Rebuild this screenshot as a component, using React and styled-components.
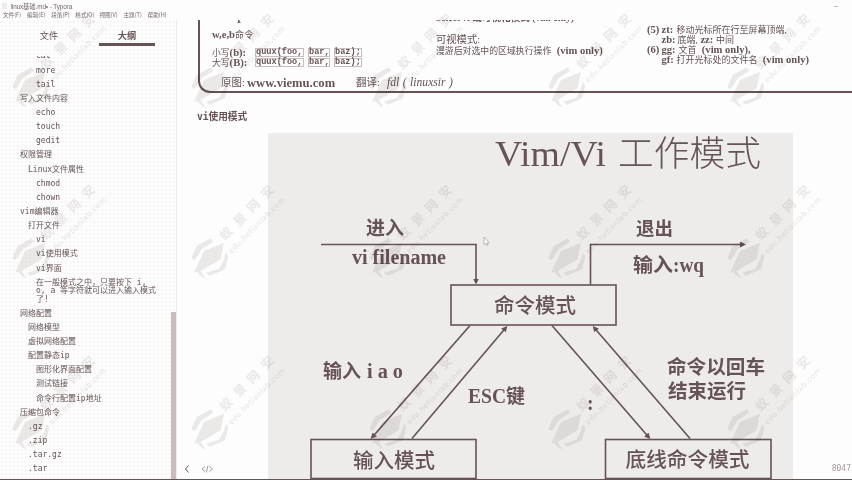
import React from "react";
import styled, { createGlobalStyle, css } from "styled-components";

const INK = "#655355";
const MID = "#c8bcbc";
const SOFT = "#eeecea";
const PAPER = "#fdfdfd";
const SANS = '"Noto Sans CJK SC", sans-serif';
const MONO = '"DejaVu Sans Mono", "Noto Sans CJK SC", monospace';
const SERIF = '"Liberation Serif", "Noto Sans CJK SC", serif';

const Global = createGlobalStyle`
  * { box-sizing: border-box; }
  body { margin: 0; background: ${PAPER}; color: ${INK}; overflow: hidden; }
`;

const Window = styled.div`
  position: relative;
  display: flex;
  flex-direction: column;
  width: 852px;
  height: 480px;
  overflow: hidden;
  background: ${PAPER};
  border-bottom: 1px solid ${INK};
`;

const Header = styled.header`
  height: 20px;
  flex: none;
  font-family: ${SANS};
  white-space: nowrap;
`;

const TitleBar = styled.div`
  display: flex;
  align-items: center;
  height: 11px;
  padding: 1px 14px 0 2px;
  font: 6.3px/9px "Liberation Sans", ${SANS};
  letter-spacing: -0.07px;
  color: #756466;
`;

const AppIcon = styled.span`
  width: 5px;
  height: 6px;
  margin-right: 3.5px;
  background: ${SOFT};
`;

const Minimise = styled.span`
  width: 4px;
  height: 1px;
  margin-left: auto;
  background: ${MID};
`;

const MenuBar = styled.nav`
  display: grid;
  grid-template-columns: repeat(7, 24.1px);
  height: 9px;
  padding-left: 3px;
  font-size: 5.6px;
  line-height: 9px;
  color: #756466;
`;

const Body = styled.div`
  display: flex;
  flex: 1;
  min-height: 0;
`;

const Sidebar = styled.aside`
  display: flex;
  flex-direction: column;
  flex: none;
  width: 177px;
  border-right: 1px solid ${SOFT};
  background: radial-gradient(circle, #eeecea 0.6px, transparent 0.8px) 0 0 / 4px 4px ${PAPER};
`;

const Tabs = styled.div`
  display: grid;
  grid-template-columns: 78px 78px;
  flex: none;
  height: 26px;
  padding-left: 10px;
`;

const Tab = styled.div`
  display: flex;
  justify-content: center;
  align-items: center;
  width: ${(p) => (p.$active ? "56px" : "78px")};
  height: 26px;
  margin-left: ${(p) => (p.$active ? "11px" : 0)};
  padding-top: 6px;
  border-bottom: 3px solid ${(p) => (p.$active ? INK : "transparent")};
  font: ${(p) => (p.$active ? 700 : 400)} 9.2px/14px ${SANS};
`;

const Outline = styled.div`
  display: flex;
  flex: 1;
  min-height: 0;
  margin-top: 10px;
  overflow: hidden;
`;

const OutlineList = styled.ul`
  flex: 1;
  margin: -6.4px 0 0;
  padding: 0;
  list-style: none;
  font: 8px/8.5px ${MONO};
`;

const OutlineItem = styled.li`
  min-height: 14.15px;
  padding: 2.8px 12px 2.8px ${(p) => 20 + p.$level * 8}px;
  white-space: ${(p) => (p.$wrap ? "pre-line" : "nowrap")};
  ${(p) => !p.$wrap && css`height: 14.15px;`}
`;

const ScrollThumb = styled.div`
  width: 5px;
  margin-top: 256px;
  background: ${MID};
`;

const Main = styled.main`
  display: flex;
  flex-direction: column;
  flex: 1;
  min-width: 0;
  overflow: hidden;
`;

const Sheet = styled.section`
  display: grid;
  grid-template-columns: 224px 211px 1fr;
  flex: none;
  height: 73px;
  margin-left: 21px;
  padding-left: 12px;
  border: solid ${INK};
  border-width: 0 0 2px 2px;
  border-bottom-left-radius: 12px;
  overflow: hidden;
  font-family: ${SERIF};
  white-space: nowrap;
`;

const SheetColumn = styled.div`
  display: flex;
  flex-direction: column;
  padding-top: ${(p) => p.$top || 0}px;
`;

const Line = styled.div`
  display: flex;
  align-items: center;
  flex: none;
  height: ${(p) => p.$h}px;
  margin-left: ${(p) => p.$indent || 0}px;
  font-size: ${(p) => p.$size || 9}px;
  line-height: ${(p) => p.$h}px;
  b {
    white-space: pre;
    font-size: 10.6px;
  }
`;

const Stub = styled.div`
  display: flex;
  align-items: flex-end;
  flex: none;
  height: ${(p) => p.$h}px;
  overflow: hidden;
  padding-left: ${(p) => p.$indent || 0}px;
  font: 700 ${(p) => p.$size || 11}px/11px ${SERIF};
`;

const Label = styled.span`
  width: ${(p) => p.$w}px;
  flex: none;
  font-weight: ${(p) => (p.$bold ? 700 : 400)};
  font-size: ${(p) => (p.$bold ? "10.6px" : "inherit")};
`;

const Token = styled.code`
  width: ${(p) => p.$w}px;
  height: 9px;
  margin-right: 4px;
  border: 1px solid ${MID};
  font: 700 8.6px/7px "Liberation Mono", monospace;
  white-space: pre;
`;

const Site = styled.span`
  flex: none;
  width: 109px;
  font-size: 12.6px;
  font-weight: 700;
`;

const Translator = styled.i`
  font-size: 11.6px;
  word-spacing: 0.6px;
`;

const SectionTitle = styled.h2`
  flex: none;
  margin: 16px 0 8.5px 20px;
  font: 700 9.7px/15.5px ${MONO};
  letter-spacing: -0.05px;
`;

const Figure = styled.svg`
  display: block;
  flex: none;
  width: 525px;
  height: 347px;
  margin-left: 91px;
  background: ${SOFT};
`;

const Footer = styled.footer`
  position: absolute;
  left: 177px;
  right: 0;
  bottom: 4px;
  display: flex;
  align-items: center;
  height: 12px;
  padding: 0 1px 0 7px;
  font: 8px/12px ${MONO};
  color: #a89a9b;
  svg { fill: none; stroke-width: 1; }
`;

const WordCount = styled.span`
  margin-left: auto;
`;

const WatermarkLayer = styled.div`
  position: absolute;
  inset: 13px 0 0 12px;
  display: grid;
  grid-template-columns: repeat(5, 178.7px);
  grid-auto-rows: 171px;
  pointer-events: none;
  mix-blend-mode: multiply;
`;

const MarkSvg = styled.svg`
  width: 100px;
  height: 100px;
  fill: #edebea;
  font-family: ${SANS};
`;

const Pointer = styled.svg`
  position: absolute;
  left: 483px;
  top: 236px;
  width: 7px;
  height: 11px;
`;

const menus = ["文件(F)", "编辑(E)", "段落(P)", "格式(O)", "视图(V)", "主题(T)", "帮助(H)"];

const outline = [
  [2, "cat"], [2, "more"], [2, "tail"], [0, "写入文件内容"], [2, "echo"], [2, "touch"],
  [2, "gedit"], [0, "权限管理"], [1, "Linux文件属性"], [2, "chmod"], [2, "chown"],
  [0, "vim编辑器"], [1, "打开文件"], [2, "vi"], [2, "vi使用模式"], [2, "vi界面"],
  [2, "在一般模式之中，只要按下 i,\no, a 等字符就可以进入输入模式\n了!"],
  [0, "网络配置"], [1, "网络模型"], [1, "虚拟网络配置"], [1, "配置静态ip"],
  [2, "图形化界面配置"], [2, "测试链接"], [2, "命令行配置ip地址"], [0, "压缩包命令"],
  [1, ".gz"], [1, ".zip"], [1, ".tar.gz"], [1, ".tar"],
];

const wires = [
  "M321 244H476V282",
  "M590.5 284V244H744",
  "M470 325L372 437",
  "M412 438L506 327",
  "M552 325L649 437",
  "M690 438L594 327",
];

const boxes = [[451, 284.5, 165, 40], [311, 439, 165, 39], [605.5, 439, 165.5, 39]];

const captions = [
  { x: 366, y: 234, w: 38, size: 19, text: "进入" },
  { x: 352, y: 263.5, w: 94, size: 20, text: "vi filename" },
  { x: 636, y: 234, w: 37, size: 18.5, text: "退出" },
  { x: 633, y: 271.5, w: 40, size: 19.5, text: "输入" },
  { x: 673, y: 271, w: 31, size: 20.5, text: ":wq" },
  { x: 494, y: 312.5, w: 82, size: 20.5, text: "命令模式", medium: true },
  { x: 323, y: 377, w: 38, size: 19, text: "输入" },
  { x: 367, y: 377, w: 36, size: 20, text: "i a o" },
  { x: 468, y: 402, w: 38, size: 20, text: "ESC" },
  { x: 506, y: 402, w: 19, size: 19, text: "键" },
  { x: 587, y: 409, w: 6.5, size: 20, text: ":" },
  { x: 667, y: 373, w: 98, size: 19.5, text: "命令以回车" },
  { x: 668, y: 397.5, w: 78, size: 19.5, text: "结束运行" },
  { x: 353, y: 467.5, w: 82, size: 20.5, text: "输入模式", medium: true },
  { x: 625.5, y: 466.5, w: 124, size: 20.7, text: "底线命令模式", medium: true },
];

function ModeDiagram() {
  return (
    <Figure viewBox="268 132.5 525 347" fontFamily={SERIF} fill={INK}>
      <defs>
        <marker id="arrow" markerUnits="userSpaceOnUse" markerWidth="8" markerHeight="7" refX="4" refY="3" orient="auto">
          <path d="M0 0L6 3L0 6Z" fill={INK} />
        </marker>
      </defs>
      <text x="495" y="165" fontSize="36" textLength="111" lengthAdjust="spacingAndGlyphs">Vim/Vi</text>
      <text x="618" y="165.5" fontSize="35.7" fontWeight="300" textLength="143">工作模式</text>
      <g fill="none" stroke={INK} strokeWidth="1.6">
        {wires.map((d) => <path key={d} d={d} markerEnd="url(#arrow)" />)}
        {boxes.map(([x, y, w, h]) => <rect key={x} x={x} y={y} width={w} height={h} />)}
      </g>
      {captions.map((c) => (
        <text
          key={`${c.x}-${c.y}`}
          x={c.x}
          y={c.y}
          fontSize={c.size}
          fontWeight={c.medium ? 500 : 700}
          textLength={c.w}
          lengthAdjust="spacingAndGlyphs"
        >
          {c.text}
        </text>
      ))}
    </Figure>
  );
}

function Watermark() {
  const glyphs = [["蚁", 35, 49.3], ["景", 49, 35.3], ["网", 62.3, 22], ["安", 76.3, 7.7]];
  return (
    <MarkSvg viewBox="0 0 100 100" overflow="visible">
      <path d="M.3 74L5.7 62L19.7 54.3L22.3 57.7L10.7 65.3L3.7 76.3Z" />
      <path d="M13 67L33 58.7L29.7 75.3L9.7 87L14 93.7L12 93.7L6 88L3 88.7Z" />
      <path d="M35 68.7L37.3 73L34 85.3L19 91.7L15 88.7L28.3 84.7L32.3 77Z" />
      {glyphs.map(([g, x, y]) => (
        <text key={g} transform={`translate(${x} ${y}) rotate(-45)`} y="4.5" fontSize="12.5" fontWeight="700" textAnchor="middle">{g}</text>
      ))}
      <text transform="translate(40.5 70) rotate(-45)" fontSize="7.6" fontWeight="500" textLength="76">edu.hetianlab.com</text>
    </MarkSvg>
  );
}

function MotionRow({ label, keys, h }) {
  return (
    <Line $h={h} $size={8.8}>
      <Label $w={43}>{label}<b>{keys}</b></Label>
      <Token $w={49}>quux(foo,</Token>
      <Token $w={22}>bar,</Token>
      <Token $w={28}>baz);</Token>
    </Line>
  );
}

function CheatSheet() {
  return (
    <Sheet>
      <SheetColumn>
        <Stub $h={5} $indent={24}>1</Stub>
        <Line $h={20} $size={9.2}><b>w,e,b</b>命令</Line>
        <Line $h={2.5} />
        <MotionRow label="小写" keys="(b):" h={10} />
        <MotionRow label="大写" keys="(B):" h={10} />
        <Line $h={2.5} />
        <Line $h={26} $indent={9} $size={10.5}>
          <Label $w={26}>原图:</Label>
          <Site>www.viemu.com</Site>
          <Label $w={31}>翻译:</Label>
          <Translator>fdl ( linuxsir )</Translator>
        </Line>
      </SheetColumn>
      <SheetColumn>
        <Stub $h={3} $size={9.6}>Select vi 或可视化模式 (vim only)</Stub>
        <Line $h={11} />
        <Line $h={12} $size={10.3}>可视模式:</Line>
        <Line $h={10} $size={8.9}>漫游后对选中的区域执行操作<b>{"  (vim only)"}</b></Line>
      </SheetColumn>
      <SheetColumn $top={4.5}>
        <Line $h={10.2}><Label $w={14.5} $bold>(5)</Label><Label $w={15} $bold>zt:</Label>移动光标所在行至屏幕顶端,</Line>
        <Line $h={10.2} $indent={14.5}><Label $w={16} $bold>zb:</Label>底端,<b> zz: </b>中间</Line>
        <Line $h={10.2}><Label $w={14.5} $bold>(6)</Label><Label $w={17} $bold>gg:</Label>文首<b>{"  (vim only),"}</b></Line>
        <Line $h={10.2} $indent={14.5}><Label $w={15} $bold>gf:</Label>打开光标处的文件名<b>{"  (vim only)"}</b></Line>
      </SheetColumn>
    </Sheet>
  );
}

export default function App() {
  return (
    <Window>
      <Global />
      <Header>
        <TitleBar><AppIcon />linux基础.md• - Typora<Minimise /></TitleBar>
        <MenuBar>{menus.map((m) => <span key={m}>{m}</span>)}</MenuBar>
      </Header>
      <Body>
        <Sidebar>
          <Tabs><Tab>文件</Tab><Tab $active>大纲</Tab></Tabs>
          <Outline>
            <OutlineList>
              {outline.map(([level, text]) => (
                <OutlineItem key={text} $level={level} $wrap={text.includes("\n")}>{text}</OutlineItem>
              ))}
            </OutlineList>
            <ScrollThumb />
          </Outline>
        </Sidebar>
        <Main>
          <CheatSheet />
          <SectionTitle>vi使用模式</SectionTitle>
          <ModeDiagram />
        </Main>
      </Body>
      <Footer>
        <svg width="36" height="10">
          <path d="M4.5 1.5L1.5 5L4.5 8.5" stroke={INK} />
          <path d="M21 2.5L18 5L21 7.5M24 1.5L22.3 8.5M25.5 2.5L28.5 5L25.5 7.5" stroke="#a89a9b" />
        </svg>
        <WordCount>8047</WordCount>
      </Footer>
      <WatermarkLayer>
        {Array.from({ length: 15 }, (_, i) => <Watermark key={i} />)}
      </WatermarkLayer>
      <Pointer viewBox="0 0 7 11">
        <path d="M1 1V8.5L2.8 7.2L4 9.5L5.2 9L4.3 6.8L6 6.5Z" fill={PAPER} stroke="#a89a9b" strokeWidth=".7" />
      </Pointer>
    </Window>
  );
}
